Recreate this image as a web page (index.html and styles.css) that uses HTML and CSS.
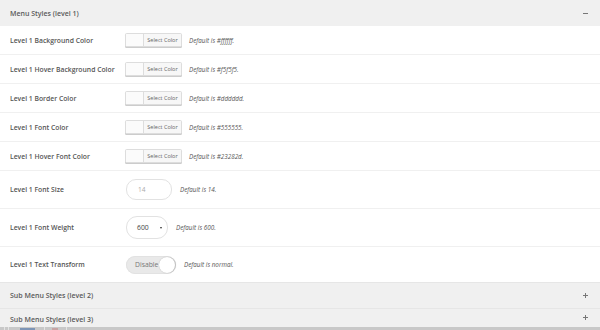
FILE: index.html
```html
<!DOCTYPE html>
<html>
<head>
<meta charset="utf-8">
<link rel="stylesheet" href="styles.css">
</head>
<body>
<div class="panel">
  <div class="section-head"><span>Menu Styles (level 1)</span><span class="toggle-icon minus"></span></div>
  <div class="rows">
    <div class="row">
      <div class="label">Level 1 Background Color</div>
      <div class="picker"><span class="swatch"></span><span class="pick-text">Select Color</span></div>
      <div class="hint">Default is #ffffff.</div>
    </div>
    <div class="row">
      <div class="label">Level 1 Hover Background Color</div>
      <div class="picker"><span class="swatch"></span><span class="pick-text">Select Color</span></div>
      <div class="hint">Default is #f5f5f5.</div>
    </div>
    <div class="row">
      <div class="label">Level 1 Border Color</div>
      <div class="picker"><span class="swatch"></span><span class="pick-text">Select Color</span></div>
      <div class="hint">Default is #dddddd.</div>
    </div>
    <div class="row">
      <div class="label">Level 1 Font Color</div>
      <div class="picker"><span class="swatch"></span><span class="pick-text">Select Color</span></div>
      <div class="hint">Default is #555555.</div>
    </div>
    <div class="row">
      <div class="label">Level 1 Hover Font Color</div>
      <div class="picker"><span class="swatch"></span><span class="pick-text">Select Color</span></div>
      <div class="hint">Default is #23282d.</div>
    </div>
    <div class="row tall">
      <div class="label">Level 1 Font Size</div>
      <div class="num-input">14</div>
      <div class="hint">Default is 14.</div>
    </div>
    <div class="row tall">
      <div class="label">Level 1 Font Weight</div>
      <div class="select"><span>600</span><span class="arrow"></span></div>
      <div class="hint">Default is 600.</div>
    </div>
    <div class="row mid">
      <div class="label">Level 1 Text Transform</div>
      <div class="switch"><span>Disable</span><span class="knob"></span></div>
      <div class="hint">Default is normal.</div>
    </div>
  </div>
  <div class="section-head closed"><span>Sub Menu Styles (level 2)</span><span class="toggle-icon plus"></span></div>
  <div class="section-head closed last"><span>Sub Menu Styles (level 3)</span><span class="toggle-icon plus"></span></div>
  <div class="taskbar">
    <span class="tb-line"></span><span class="tb-line"></span><span class="tb-blue"></span><span class="tb-line"></span><span class="tb-pink"></span><span class="tb-line"></span>
  </div>
</div>
</body>
</html>
```
FILE: styles.css
```css
* { box-sizing: border-box; }
html, body { margin: 0; padding: 0; background: #fff; }
body { font-family: "Open Sans", "Liberation Sans", sans-serif; color: #555; width: 600px; height: 330px; overflow: hidden; }
.panel { display: flex; flex-direction: column; width: 600px; }
.section-head {
  height: 26px; background: #f0f0f0; display: flex; align-items: center; justify-content: space-between;
  padding: 0 12px 0 10px; font-size: 7px; font-weight: 600; color: #5a5a5a;
}
.section-head.closed { border-top: 1px solid #e6e6e6; }
.section-head.last { height: 19px; align-items: flex-start; padding-top: 6px; }
.toggle-icon { position: relative; width: 5px; height: 5px; display: block; }
.toggle-icon.minus::before { content: ""; position: absolute; left: 0; top: 2px; width: 5px; height: 1px; background: #777; }
.toggle-icon.plus::before { content: ""; position: absolute; left: 0; top: 2px; width: 5px; height: 1px; background: #777; }
.toggle-icon.plus::after { content: ""; position: absolute; left: 2px; top: 0; width: 1px; height: 5px; background: #777; }
.rows { display: flex; flex-direction: column; }
.row { height: 29px; display: flex; align-items: center; padding-left: 10px; border-bottom: 1.5px solid #f0f0f0; }
.row.tall { height: 38px; }
.row.mid { height: 35px; border-bottom: none; }
.label { width: 115px; font-size: 6.8px; font-weight: 600; color: #555; }
.picker { width: 57px; height: 14px; border: 1px solid #ddd; border-radius: 1.5px; display: flex; background: #f7f7f7; box-shadow: 0 1px 0 #ccc; }
.swatch { width: 18px; height: 100%; background: #fbfbfb; border-right: 1px solid #ddd; border-radius: 1px 0 0 1px; }
.pick-text { flex: 1; font-size: 5.5px; color: #666; display: flex; align-items: center; justify-content: center; }
.hint { margin-left: 7px; font-size: 6.3px; font-style: italic; color: #555; }
.num-input { margin-left: 1px; width: 46px; height: 21px; border: 1px solid #e2e2e2; border-radius: 10px; font-size: 6.6px; color: #aaa; display: flex; align-items: center; padding-left: 11px; }
.num-input + .hint { margin-left: 8px; }
.select { margin-left: 1px; width: 42px; height: 23px; border: 1px solid #e2e2e2; border-radius: 11px; font-size: 6.8px; color: #444; display: flex; align-items: center; justify-content: space-between; padding: 0 5px 0 10px; }
.select + .hint { margin-left: 8px; }
.arrow { width: 0; height: 0; border-left: 1.5px solid transparent; border-right: 1.5px solid transparent; border-top: 2.5px solid #333; }
.switch { margin-left: 1px; width: 50px; height: 18px; border-radius: 9px; background: #e9e9e9; display: flex; align-items: center; justify-content: space-between; padding: 0 1px 0 9px; font-size: 6.8px; color: #777; box-shadow: inset 0 0 0 1px #e2e2e2; }
.knob { width: 16px; height: 16px; border-radius: 50%; background: #fff; box-shadow: 0 0 1px #aaa, 1px 0 1px rgba(0,0,0,0.15); }
.switch + .hint { margin-left: 8px; }
.taskbar { height: 4px; background: #c8c8c8; display: flex; align-items: flex-start; gap: 0; padding-left: 4px; }
.tb-line { width: 1px; height: 4px; background: #e4e4e4; margin-right: 3px; }
.tb-blue { width: 15px; height: 3px; background: #7d95b6; margin: 1px 9px 0 8px; }
.tb-pink { width: 6px; height: 3px; background: #c7a4a4; margin: 1px 8px 0 4px; }
```
